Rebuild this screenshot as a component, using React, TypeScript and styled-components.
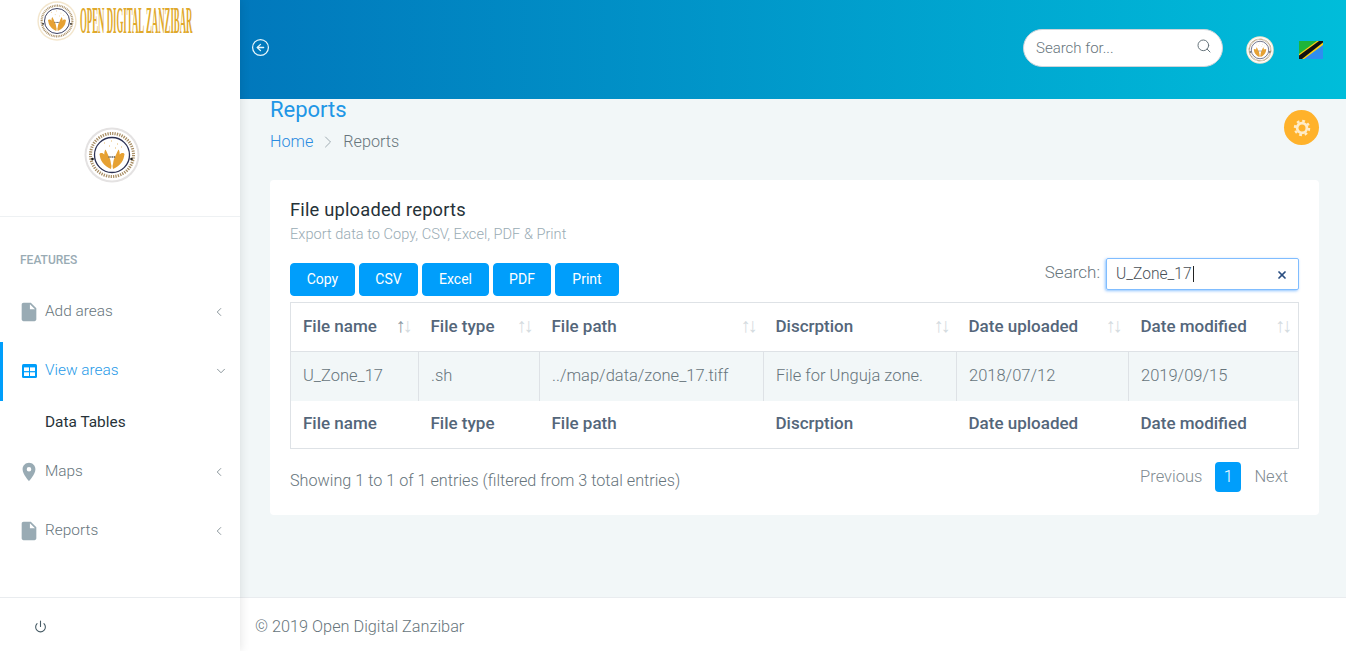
import React from 'react'
import styled, { createGlobalStyle } from 'styled-components'
import { ChevronDown, ChevronLeft, ChevronRight, CircleArrowLeft, Power, Search, X } from 'lucide-react'
import { MdInsertDriveFile, MdPlace } from 'react-icons/md'

const GlobalStyle = createGlobalStyle`
  html, body {
    margin: 0;
    padding: 0;
    height: 100%;
    overflow: hidden;
    background: #f2f7f8;
    font-family: Roboto, 'Liberation Sans', sans-serif;
    font-weight: 300;
    color: #67757c;
  }
  * { box-sizing: border-box; }
`

const handPath = 'M15.500 27c.5 3 1 6 3 8.500 2 3 5 5 8.500 6.500l.5-3c-1-3-.5-6-2.500-9-1-2-2-5-3.500-7.500-1 1-1.200 3-1.200 5-1-1.500-4-2.500-5 0z'

const Emblem: React.FC<{ size: number; ring?: boolean }> = ({ size, ring }) => (
  <svg width={size} height={size} viewBox="0 0 56 56">
    <circle cx="28" cy="28" r="27.500" fill={ring ? '#e4e2e2' : '#f3e6cd'} />
    <circle cx="28" cy="28" r="25.500" fill="#fff" />
    <circle cx="28" cy="28" r="21.500" fill="none" stroke="#a98f66" strokeWidth="3" strokeDasharray="1.300 1.100" />
    <circle cx="28" cy="28" r="17.500" fill="#fff" stroke="#2b3154" strokeWidth="1.300" />
    <circle cx="8.500" cy="32" r="1.300" fill="#222" />
    <circle cx="47.500" cy="32" r="1.300" fill="#222" />
    <path d={handPath} fill="#e6a133" />
    <path d={handPath} fill="#e6a133" transform="matrix(-1 0 0 1 56 0)" />
    <path d="M20 16h1M27 14h1M33 17h1M25 19h1M31 21h1M37 20h1" stroke="#e7b869" strokeWidth="1" />
    <path d="M24.500 30h7" stroke="#555" strokeWidth="1.400" strokeDasharray="1.200 .6" />
  </svg>
)

const TanzaniaFlag = () => (
  <svg width="24" height="18" viewBox="0 0 24 18">
    <rect width="24" height="18" fill="#1eb53a" />
    <path d="M24 0v18H0z" fill="#2f8df0" />
    <path d="M0 18v-5L18 0h6v4L5 18z" fill="#fcd116" />
    <path d="M0 18v-3.500L20 0h4v1.500L3 18z" fill="#111" />
  </svg>
)

const TableIcon = () => (
  <svg width="15" height="14" viewBox="0 0 15 14">
    <rect width="15" height="14" rx="1.500" fill="#009efb" />
    <rect x="2" y="3.400" width="5" height="3.700" fill="#fff" />
    <rect x="8" y="3.400" width="5" height="3.700" fill="#fff" />
    <rect x="2" y="8.300" width="5" height="3.700" fill="#fff" />
    <rect x="8" y="8.300" width="5" height="3.700" fill="#fff" />
  </svg>
)

const GearIcon = () => (
  <svg width="18" height="18" viewBox="0 0 24 24" fill="none" stroke="currentColor">
    <circle cx="12" cy="12" r="6.500" strokeWidth="3.600" />
    <circle cx="12" cy="12" r="9.500" strokeWidth="3" strokeDasharray="3.700 3.760" />
  </svg>
)

const navItems = [
  { key: 'add', label: 'Add areas', icon: <MdInsertDriveFile size={22} /> },
  { key: 'view', label: 'View areas', icon: <TableIcon />, active: true },
  { key: 'maps', label: 'Maps', icon: <MdPlace size={22} /> },
  { key: 'reports', label: 'Reports', icon: <MdInsertDriveFile size={22} /> }
]

const columns = [
  { title: 'File name', width: 128 },
  { title: 'File type', width: 121 },
  { title: 'File path', width: 224 },
  { title: 'Discrption', width: 193 },
  { title: 'Date uploaded', width: 172 },
  { title: 'Date modified', width: 170 }
]

const row = ['U_Zone_17', '.sh', '../map/data/zone_17.tiff', 'File for Unguja zone.', '2018/07/12', '2019/09/15']

const exportButtons = [
  { label: 'Copy', width: 65 },
  { label: 'CSV', width: 59 },
  { label: 'Excel', width: 67 },
  { label: 'PDF', width: 58 },
  { label: 'Print', width: 64 }
]

export default function App() {
  return (
    <Shell>
      <GlobalStyle />
      <Sidebar>
        <LogoBar>
          <Emblem size={40} />
          <LogoWord viewBox="0 0 470 44" width="112" height="44" preserveAspectRatio="none">
            <text x="0" y="33" fontFamily="'Liberation Serif', serif" fontSize="37" fontWeight="700" fill="#e0a92c">
              OPEN DIGITAL ZANZIBAR
            </text>
          </LogoWord>
        </LogoBar>
        <Profile>
          <Emblem size={56} ring />
        </Profile>
        <NavArea>
          <NavHeading>FEATURES</NavHeading>
          {navItems.map((item) => (
            <React.Fragment key={item.key}>
              <NavItem $active={item.active}>
                <NavIcon>{item.icon}</NavIcon>
                <NavLabel>{item.label}</NavLabel>
                <NavArrow $open={item.active}>
                  {item.active ? <ChevronDown size={14} strokeWidth={1.300} /> : <ChevronLeft size={14} strokeWidth={1.300} />}
                </NavArrow>
              </NavItem>
              {item.active && <SubItem>Data Tables</SubItem>}
            </React.Fragment>
          ))}
        </NavArea>
        <SidebarFooter>
          <Power size={13} strokeWidth={2} />
        </SidebarFooter>
      </Sidebar>

      <Main>
        <TopBar>
          <CircleArrowLeft size={19} strokeWidth={1.600} color="#e6f6fb" />
          <TopRight>
            <SearchPill>
              <SearchInput placeholder="Search for..." />
              <Search size={16} strokeWidth={1.500} color="#67757c" />
            </SearchPill>
            <TopAvatar>
              <Emblem size={28} />
            </TopAvatar>
            <FlagSlot>
              <TanzaniaFlag />
            </FlagSlot>
          </TopRight>
        </TopBar>

        <Content>
          <PageHead>
            <div>
              <PageTitle>Reports</PageTitle>
              <Breadcrumb>
                <Crumb href="#">Home</Crumb>
                <ChevronRight size={20} strokeWidth={1} color="#8f9ca3" />
                <span>Reports</span>
              </Breadcrumb>
            </div>
            <GearButton>
              <GearIcon />
            </GearButton>
          </PageHead>

          <Card>
            <CardTitle>File uploaded reports</CardTitle>
            <CardSubtitle>Export data to Copy, CSV, Excel, PDF &amp; Print</CardSubtitle>

            <Toolbar>
              <ButtonGroup>
                {exportButtons.map((b) => (
                  <ExportButton key={b.label} $width={b.width}>
                    {b.label}
                  </ExportButton>
                ))}
              </ButtonGroup>
              <FilterLabel>
                Search:
                <FilterBox>
                  <FilterText>U_Zone_17</FilterText>
                  <ClearMark>
                    <X size={12} strokeWidth={3.500} color="#2b4f81" />
                  </ClearMark>
                </FilterBox>
              </FilterLabel>
            </Toolbar>

            <ReportTable>
              <colgroup>
                {columns.map((c) => (
                  <col key={c.title} width={c.width} />
                ))}
              </colgroup>
              <thead>
                <tr>
                  {columns.map((c, i) => (
                    <HeadCell key={c.title}>
                      {c.title}
                      <SortMark>
                        <SortGlyph $on={i === 0}>↑</SortGlyph>
                        <SortGlyph>↓</SortGlyph>
                      </SortMark>
                    </HeadCell>
                  ))}
                </tr>
              </thead>
              <tbody>
                <tr>
                  {row.map((value) => (
                    <BodyCell key={value}>{value}</BodyCell>
                  ))}
                </tr>
              </tbody>
              <tfoot>
                <tr>
                  {columns.map((c) => (
                    <FootCell key={c.title}>{c.title}</FootCell>
                  ))}
                </tr>
              </tfoot>
            </ReportTable>

            <TableFooter>
              <Info>Showing 1 to 1 of 1 entries (filtered from 3 total entries)</Info>
              <Pager>
                <PagerLink>Previous</PagerLink>
                <PagerCurrent>1</PagerCurrent>
                <PagerLink>Next</PagerLink>
              </Pager>
            </TableFooter>
          </Card>
        </Content>

        <Footer>© 2019 Open Digital Zanzibar</Footer>
      </Main>
    </Shell>
  )
}

const Shell = styled.div`
  display: grid;
  grid-template-columns: 240px 1fr;
  height: 100vh;
  overflow: hidden;
`

const Sidebar = styled.aside`
  display: flex;
  flex-direction: column;
  background: #fff;
  box-shadow: 1px 0 9px rgba(0, 0, 0, 0.1);
  z-index: 2;
`

const LogoBar = styled.div`
  display: flex;
  align-items: flex-start;
  gap: 3px;
  height: 127px;
  padding: 1px 0 0 37px;
`

const LogoWord = styled.svg`
  margin-top: -1px;
  overflow: visible;
`

const Profile = styled.div`
  display: flex;
  justify-content: center;
  height: 90px;
  padding-right: 16px;
  border-bottom: 1px solid #eef1f3;
`

const NavArea = styled.nav`
  flex: 1;
  padding-top: 36px;
`

const NavHeading = styled.div`
  height: 30px;
  padding-left: 20px;
  font-size: 12px;
  line-height: 14px;
  font-weight: 500;
  color: #99abb4;
`

const NavItem = styled.div<{ $active?: boolean }>`
  display: flex;
  align-items: center;
  height: 59px;
  padding: 0 14px 2px ${(p) => (p.$active ? '15px' : '18px')};
  border-left: ${(p) => (p.$active ? '3px solid #009efb' : '0')};
  color: ${(p) => (p.$active ? '#279ae8' : '#67757c')};
`

const NavIcon = styled.span`
  display: flex;
  flex: 0 0 22px;
  justify-content: center;
  align-items: center;
  margin-right: 5px;
  color: #99abb4;
`

const NavLabel = styled.span`
  flex: 1;
  padding-bottom: 2px;
  font-size: 15.400px;
`

const NavArrow = styled.span<{ $open?: boolean }>`
  display: flex;
  margin-right: ${(p) => (p.$open ? '-2px' : '0')};
  color: #67757c;
`

const SubItem = styled.div`
  height: 42px;
  padding-left: 45px;
  font-size: 15.400px;
  line-height: 42px;
  font-weight: 400;
  color: #263238;
`

const SidebarFooter = styled.div`
  display: flex;
  align-items: center;
  height: 54px;
  padding: 3px 0 0 34px;
  border-top: 1px solid #e9ecef;
  color: #455a64;
`

const Main = styled.main`
  display: flex;
  flex-direction: column;
  min-width: 0;
`

const TopBar = styled.header`
  display: flex;
  align-items: center;
  justify-content: space-between;
  flex: 0 0 99px;
  padding: 0 23px 5px 11px;
  background: linear-gradient(to right, #0178bc 0%, #00bdda 100%);
`

const TopRight = styled.div`
  display: flex;
  align-items: center;
`

const SearchPill = styled.div`
  display: flex;
  align-items: center;
  width: 200px;
  height: 38px;
  margin-top: 1px;
  padding: 0 10px 4px 12px;
  background: #fff;
  border-radius: 19px;
  border: 1px solid #ced4da;
`

const SearchInput = styled.input`
  flex: 1;
  width: 0;
  border: 0;
  outline: 0;
  padding: 0;
  margin-top: 4px;
  font-family: inherit;
  font-size: 15px;
  font-weight: 300;
  &::placeholder {
    color: #67757c;
    opacity: 1;
  }
`

const TopAvatar = styled.span`
  display: flex;
  margin: 6px 25px 0 23px;
`

const FlagSlot = styled.span`
  display: flex;
  margin-top: 5px;
`

const Content = styled.div`
  flex: 1;
  padding: 0 27px 0 30px;
`

const PageHead = styled.div`
  display: flex;
  align-items: flex-start;
  justify-content: space-between;
  height: 81px;
`

const PageTitle = styled.h1`
  margin: 0;
  font-size: 22px;
  line-height: 22px;
  font-weight: 400;
  color: #2196e6;
`

const Breadcrumb = styled.div`
  display: flex;
  align-items: center;
  gap: 5px;
  margin-top: 10px;
  font-size: 16.200px;
  line-height: 22px;
`

const Crumb = styled.a`
  color: #2a8be0;
  text-decoration: none;
`

const GearButton = styled.span`
  display: flex;
  align-items: center;
  justify-content: center;
  width: 35px;
  height: 35px;
  margin-top: 11px;
  border-radius: 50%;
  background: #ffb22b;
  color: #ffecc8;
`

const Card = styled.section`
  height: 335px;
  padding: 20px;
  background: #fff;
  border-radius: 4px;
`

const CardTitle = styled.h2`
  margin: 0;
  font-size: 18.300px;
  line-height: 20px;
  letter-spacing: 0.2px;
  font-weight: 400;
  color: #263238;
`

const CardSubtitle = styled.p`
  margin: 5px 0 0;
  font-size: 14.600px;
  line-height: 18px;
  color: #99abb4;
`

const Toolbar = styled.div`
  display: flex;
  align-items: flex-start;
  justify-content: space-between;
  height: 50px;
  margin-top: 9px;
`

const ButtonGroup = styled.div`
  display: flex;
  gap: 4px;
  padding-top: 11px;
`

const ExportButton = styled.button<{ $width: number }>`
  width: ${(p) => p.$width}px;
  height: 33px;
  padding: 0 0 2px;
  border: 1px solid #009efb;
  border-radius: 4px;
  background: #009efb;
  color: #fff;
  font-family: inherit;
  font-size: 14px;
  font-weight: 400;
`

const FilterLabel = styled.label`
  display: flex;
  align-items: flex-start;
  gap: 6px;
  padding-top: 6px;
  font-size: 17px;
  line-height: 28px;
`

const FilterBox = styled.div`
  display: flex;
  align-items: center;
  justify-content: space-between;
  width: 193px;
  height: 32px;
  padding: 0 10px 0 9px;
  border: 1px solid #80bdff;
  border-radius: 2px;
  box-shadow: -1px 1px 3px rgba(0, 123, 255, 0.45);
  color: #495057;
`

const FilterText = styled.span`
  padding-right: 1px;
  border-right: 1px solid #222;
  font-size: 15.600px;
  line-height: 16px;
`

const ClearMark = styled.span`
  display: flex;
  margin-top: 2px;
`

const ReportTable = styled.table`
  width: 1008px;
  table-layout: fixed;
  border-collapse: collapse;
  border: 1px solid #dee2e6;
`

const HeadCell = styled.th`
  position: relative;
  height: 49px;
  padding: 0 12px 2px;
  text-align: left;
  font-size: 17px;
  font-weight: 500;
  color: #54667a;
  border-bottom: 1px solid #dee2e6;
`

const SortMark = styled.span`
  position: absolute;
  right: 9px;
  top: 11px;
  font-size: 20px;
  font-weight: 300;
  line-height: 22px;
  letter-spacing: -3px;
`

const SortGlyph = styled.span<{ $on?: boolean }>`
  color: ${(p) => (p.$on ? '#8e9aa3' : '#d4dbe0')};
`

const BodyCell = styled.td`
  height: 49px;
  padding: 0 12px 2px;
  font-size: 16.500px;
  background: #f2f7f8;
  border-left: 1px solid #dee2e6;
  &:first-child {
    border-left: 0;
  }
`

const FootCell = styled.td`
  height: 48px;
  padding: 0 12px 2px;
  font-size: 17px;
  font-weight: 500;
  color: #54667a;
`

const TableFooter = styled.div`
  display: flex;
  justify-content: space-between;
  padding-top: 13px;
`

const Info = styled.div`
  padding-top: 10px;
  font-size: 16.200px;
  line-height: 18px;
`

const Pager = styled.div`
  display: flex;
  align-items: center;
  gap: 13px;
  height: 30px;
  padding-right: 11px;
  font-size: 16.500px;
`

const PagerLink = styled.span`
  padding-bottom: 2px;
  color: #7f8b92;
`

const PagerCurrent = styled.span`
  width: 26px;
  height: 30px;
  border-radius: 4px;
  background: #009efb;
  color: #fff;
  text-align: center;
  line-height: 30px;
`

const Footer = styled.footer`
  display: flex;
  align-items: center;
  flex: 0 0 54px;
  padding: 3px 0 0 15px;
  background: #fff;
  border-top: 1px solid #e9ecef;
  font-size: 16.300px;
`
